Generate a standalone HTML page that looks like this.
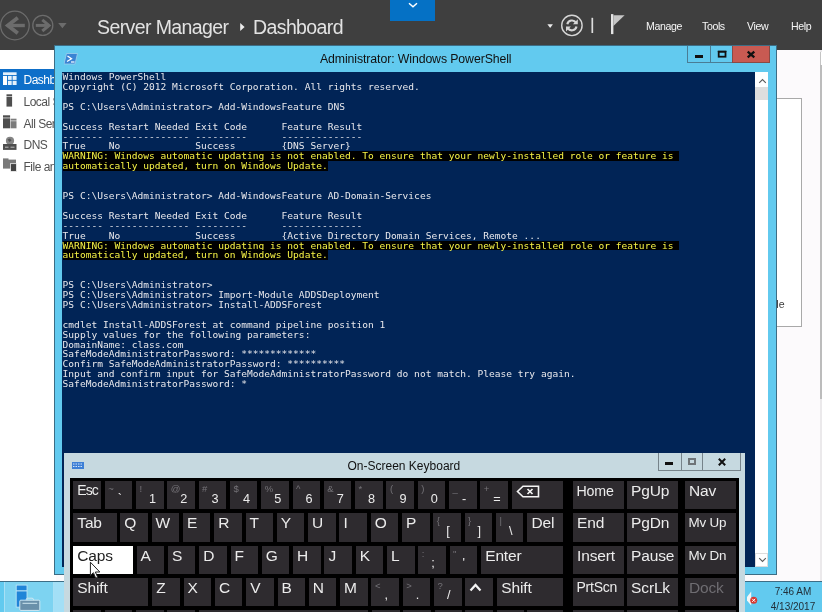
<!DOCTYPE html>
<html><head><meta charset="utf-8"><title>Server Manager</title>
<style>
*{box-sizing:border-box;margin:0;padding:0}
html,body{will-change:transform;width:822px;height:612px;overflow:hidden;background:#fcfafc;font-family:"Liberation Sans",sans-serif}
.abs{position:absolute}
#hdr{left:0;top:0;width:822px;height:50.4px;background:#3f3f3f}
#hdr .t{color:#e2e2e2;font-size:19.5px;top:15.6px;white-space:nowrap;letter-spacing:-0.6px}
#hdr .m{color:#f6f6f6;font-size:10.6px;top:20px;white-space:nowrap;letter-spacing:-0.4px}
#side{left:0;top:50px;width:56px;height:531px;background:#fff;overflow:hidden}
#side .it{left:0;width:56px;height:21px;font-size:12px;letter-spacing:-0.5px;color:#525252;white-space:nowrap;padding-left:23.5px;line-height:22px}
#side .sel{background:#0e6fc9;color:#fff}
/* PowerShell window */
#ps{left:54px;top:45px;width:723px;height:530px;background:#62caef;border:1px solid #3d6d85}
#pscon{left:7px;top:26px;width:693px;height:495px;background:#012456;overflow:hidden}
#pscon pre{position:absolute;left:0.6px;top:0.1px;font-family:"DejaVu Sans Mono","Liberation Mono",monospace;font-size:9.55px;line-height:9.9px;color:#e8e8ec;white-space:pre;letter-spacing:0.015px}
#pscon .w{background:#000;color:#f8f446;display:inline-block;height:9.9px;line-height:9.9px;vertical-align:top}
#pssb{left:700px;top:26px;width:13px;height:495px;background:#fff}
.cap{font-size:12px;color:#111;white-space:nowrap}
/* OSK */
#osk{left:63.5px;top:452.5px;width:681.7px;height:160px;background:#c6d9e0}
#kb{left:6.5px;top:25.5px;width:669.3px;height:134px;background:#000}
.k{position:absolute;background:#2e2b2f;color:#ececec;font-size:15.5px;letter-spacing:-0.15px;line-height:17px;height:28.2px;padding:1px 0 0 4px;white-space:nowrap;overflow:hidden}
.k.esc{font-size:14px;letter-spacing:-0.9px;padding-top:1.3px}
.k.hm{font-size:14.2px;padding:1.5px 0 0 3.5px}
.k.c{padding-left:0;text-align:center;width:27.7px;padding-top:4px}
.k.s{width:27.7px;padding:0}
.k.s i{position:absolute;font-style:normal;left:3.5px;top:2px;font-size:9.5px;line-height:11px;color:#757378}
.k.s b{position:absolute;font-weight:normal;left:13px;top:10.5px;font-size:12.7px;line-height:15px;color:#ececec}
.k.caps{background:#fff;color:#222}
.k.sm{font-size:13.4px;padding:1px 0 0 3.5px}
.k.dim{color:#6f6d72}
.k.ps{font-size:14px;letter-spacing:-0.25px;padding:1.5px 0 0 3.5px}
#tb{left:0;top:580.6px;width:822px;height:32px;background:#62caef;border-top:1px solid #3d6d85}
</style></head><body>
<div id="hdr" class="abs">
  <svg class="abs" style="left:0;top:0" width="80" height="50" viewBox="0 0 80 50">
    <circle cx="14.900" cy="25.500" r="14.300" fill="none" stroke="#6c6c6c" stroke-width="1.300"/>
    <path d="M24.800 25.500H8" fill="none" stroke="#6c6c6c" stroke-width="3.400"/>
    <path d="M17.800 17.800L7.800 25.500L17.800 33.200" fill="none" stroke="#6c6c6c" stroke-width="3.800"/>
    <circle cx="42.800" cy="25.400" r="10" fill="none" stroke="#6c6c6c" stroke-width="1.300"/>
    <path d="M35.800 25.400H47.500" fill="none" stroke="#6c6c6c" stroke-width="3"/>
    <path d="M42.300 19.800L49 25.400L42.300 31" fill="none" stroke="#6c6c6c" stroke-width="3"/>
    <path d="M58.200 23H66.600L62.400 28.200Z" fill="#6c6c6c"/>
  </svg>
  <div class="abs t" style="left:97px">Server Manager</div>
  <svg class="abs" style="left:238.5px;top:21.500px" width="8" height="10"><path d="M1.200 1L5.600 5L1.200 9Z" fill="#ececec"/></svg>
  <div class="abs t" style="left:253px">Dashboard</div>
  <div class="abs" style="left:390px;top:0;width:45px;height:20.5px;background:#0571c5"></div>
  <svg class="abs" style="left:407.500px;top:1.500px" width="10" height="7"><path d="M1 1.300L5 4.800L9 1.300" fill="none" stroke="#fff" stroke-width="1.500"/></svg>
  <svg class="abs" style="left:540px;top:8px" width="100" height="36" viewBox="0 0 100 36">
    <path d="M7.400 16.200H12.900L10.150 19.900Z" fill="#ececec"/>
    <circle cx="31.900" cy="17.400" r="10.200" fill="none" stroke="#d6d6d6" stroke-width="1.400"/>
    <path d="M27.300 16.300A4.800 4.800 0 0 1 36 14.600M36.500 18.500A4.800 4.800 0 0 1 27.800 20.200" fill="none" stroke="#d6d6d6" stroke-width="2.100"/>
    <path d="M37.800 11.300V16.200H32.900Z M26 23.500V18.600H30.900Z" fill="#d6d6d6"/>
    <path d="M52.300 9.800V25" stroke="#dcdcdc" stroke-width="1.700"/>
    <rect x="71" y="6.100" width="2.400" height="20" fill="#e4e4e4"/>
    <path d="M73.400 7.300H84.600L73.400 17.900Z" fill="#c6c6c6"/>
  </svg>
  <div class="abs m" style="left:646px">Manage</div>
  <div class="abs m" style="left:702px">Tools</div>
  <div class="abs m" style="left:747px">View</div>
  <div class="abs m" style="left:791px">Help</div>
</div>

<div id="side" class="abs">
  <div class="abs it sel" style="top:19.2px;height:20.6px">Dashboard</div>
  <div class="abs it" style="top:41.1px">Local Server</div>
  <div class="abs it" style="top:62.5px">All Servers</div>
  <div class="abs it" style="top:84.1px">DNS</div>
  <div class="abs it" style="top:105.700px">File and Storage</div>
  <svg class="abs" style="left:0;top:19px" width="22" height="110" viewBox="0 0 22 110">
    <g fill="#e4f1fb"><rect x="3" y="3.300" width="13.600" height="2.700"/><rect x="3" y="6.900" width="4" height="9.100" fill="#fff"/><rect x="7.900" y="6.900" width="3.800" height="4"/><rect x="12.600" y="6.900" width="4" height="4"/><rect x="7.900" y="11.800" width="3.800" height="4.200"/><rect x="12.600" y="11.800" width="4" height="4.200"/></g>
    <g fill="#4e4e4e"><rect x="6.500" y="25.300" width="5.600" height="1.700"/><rect x="6.500" y="27.600" width="5.600" height="10"/>
    <rect x="3" y="46.300" width="7.100" height="2.300"/><rect x="3" y="49.300" width="7.100" height="10"/></g>
    <g fill="#7c7c7c"><rect x="10.600" y="49.700" width="5.900" height="1.900"/><rect x="10.600" y="52.200" width="5.900" height="7.100"/></g>
    <circle cx="10" cy="71.800" r="4.100" fill="#858585"/><path d="M7.500 70.500L10 69.500L11.500 71.500L9.500 73Z" fill="#555"/>
    <rect x="3" y="75" width="13.500" height="5.900" fill="#4e4e4e"/><path d="M5 78.200H8.500M10.500 78.200H14.500" stroke="#bdbdbd" stroke-width="1"/>
    <rect x="3" y="89.400" width="5.500" height="2" fill="#7a7a7a"/><rect x="3" y="90.600" width="13" height="9" fill="#7a7a7a"/>
    <rect x="10.600" y="94.700" width="5.900" height="7.800" fill="#444" stroke="#fff" stroke-width="0.700"/>
  </svg>
</div>

<!-- right background panel of Server Manager -->
<div class="abs" style="left:770px;top:98px;width:32px;height:228.8px;border:1px solid #a9a9a9;background:#fff"></div>
<div class="abs" style="left:772.8px;top:297.6px;font-size:10.6px;color:#3c3c3c">de</div>
<div class="abs" style="left:820.2px;top:50px;width:2px;height:531px;background:#ebe9eb"></div>
<div class="abs" style="left:820.2px;top:65px;width:2px;height:334px;background:#bcbcbc"></div>
<div class="abs" style="left:820.2px;top:52px;width:2px;height:13px;background:#fff;border-left:1px solid #c4c4c4"></div>

<!-- PowerShell window -->
<div id="ps" class="abs">
  <svg class="abs" style="left:9px;top:7px" width="14" height="12" viewBox="0 0 14 12"><path d="M2.500 0.500H13.500L11 11H0Z" fill="#3a84d4" stroke="#9fd0ee" stroke-width="0.8"/><path d="M3.500 3L7.500 5.800L3 8.500" fill="none" stroke="#fff" stroke-width="1.3"/><path d="M7 9H10.500" stroke="#fff" stroke-width="1.2"/></svg>
  <div class="abs cap" style="left:265px;top:6px;font-size:12.3px;letter-spacing:-0.1px">Administrator: Windows PowerShell</div>
  <div class="abs" style="left:632px;top:0;width:24px;height:17px;border:1px solid #4a7d95;border-top:0"></div>
  <div class="abs" style="left:655px;top:0;width:23px;height:17px;border:1px solid #4a7d95;border-top:0"></div>
  <div class="abs" style="left:677px;top:0;width:38px;height:17px;border:1px solid #8a4a45;border-top:0;background:#c85a52"></div>
  <div class="abs" style="left:640px;top:9px;width:8px;height:3px;background:#111"></div>
  <svg class="abs" style="left:662px;top:4px" width="11" height="9" viewBox="0 0 11 9"><rect x="1.700" y="1.800" width="6.800" height="4.900" fill="none" stroke="#111" stroke-width="1.800"/><rect x="0.800" y="0.700" width="8.600" height="1.400" fill="#111"/></svg>
  <svg class="abs" style="left:691.300px;top:3px" width="10" height="10"><path d="M1.700 2.600L8.300 8.400M8.300 2.600L1.700 8.400" stroke="#111" stroke-width="2.300"/></svg>
  <div id="pscon" class="abs"><pre>Windows PowerShell
Copyright (C) 2012 Microsoft Corporation. All rights reserved.

PS C:\Users\Administrator&gt; Add-WindowsFeature DNS

Success Restart Needed Exit Code      Feature Result
------- -------------- ---------      --------------
True    No             Success        {DNS Server}
<span class="w">WARNING: Windows automatic updating is not enabled. To ensure that your newly-installed role or feature is </span>
<span class="w">automatically updated, turn on Windows Update.</span>


PS C:\Users\Administrator&gt; Add-WindowsFeature AD-Domain-Services

Success Restart Needed Exit Code      Feature Result
------- -------------- ---------      --------------
True    No             Success        {Active Directory Domain Services, Remote ...
<span class="w">WARNING: Windows automatic updating is not enabled. To ensure that your newly-installed role or feature is </span>
<span class="w">automatically updated, turn on Windows Update.</span>


PS C:\Users\Administrator&gt;
PS C:\Users\Administrator&gt; Import-Module ADDSDeployment
PS C:\Users\Administrator&gt; Install-ADDSForest

cmdlet Install-ADDSForest at command pipeline position 1
Supply values for the following parameters:
DomainName: class.com
SafeModeAdministratorPassword: *************
Confirm SafeModeAdministratorPassword: **********
Input and confirm input for SafeModeAdministratorPassword do not match. Please try again.
SafeModeAdministratorPassword: *</pre></div>
  <div id="pssb" class="abs">
    <div class="abs" style="left:0;top:15px;width:13px;height:13px;background:#dedede"></div>
    <svg class="abs" style="left:2.5px;top:5.5px" width="9" height="6"><path d="M1.200 4.800L4.500 1.500L7.800 4.800" fill="none" stroke="#5a5a5a" stroke-width="1.100"/></svg>
    <div class="abs" style="left:0;top:481px;width:13px;height:14px;border:1px solid #dcdcdc"></div><svg class="abs" style="left:2.5px;top:485px" width="9" height="6"><path d="M1.200 1.200L4.500 4.500L7.800 1.200" fill="none" stroke="#5a5a5a" stroke-width="1.100"/></svg>
  </div>
</div>

<!-- Taskbar -->
<div id="tb" class="abs">
  <div class="abs" style="left:3.5px;top:0;width:50px;height:31px;background:#7dd3f1;border-left:1px solid #a8e0f5;border-right:1px solid #a8e0f5"></div>
  <div class="abs" style="left:54px;top:0;width:10px;height:31px;background:#a3dff6"></div>
  <svg class="abs" style="left:14px;top:2px" width="28" height="29" viewBox="0 0 28 29">
    <rect x="2.200" y="1.100" width="10.800" height="22" fill="#1f84d8" stroke="#c4e8f8" stroke-width="0.800"/>
    <rect x="2.200" y="6.300" width="10.800" height="1.100" fill="#c4e8f8"/>
    <rect x="12.200" y="14.200" width="7.300" height="4" rx="1.500" fill="none" stroke="#cfe8f2" stroke-width="1"/>
    <rect x="5.800" y="16.200" width="20" height="10.200" rx="1" fill="#6a90aa" stroke="#d8eef7" stroke-width="0.900"/>
    <path d="M8.500 19.300H23.200" stroke="#d8eef7" stroke-width="0.900"/>
  </svg>
  <svg class="abs" style="left:744.5px;top:5px" width="18" height="22" viewBox="0 0 18 22"><path d="M2 10L6.200 4.500V18.500L2 13.500Z" fill="#f6f6f6"/><circle cx="8.700" cy="13.300" r="3.500" fill="#d63a32"/><path d="M7.200 11.800L10.200 14.800M10.200 11.800L7.200 14.800" stroke="#fff" stroke-width="1"/></svg>
  <div class="abs" style="left:765px;top:2.1px;width:56px;text-align:center;font-size:10px;color:#22303a;line-height:15px">7:46 AM<br>4/13/2017</div>
</div>

<!-- On-Screen Keyboard -->
<div id="osk" class="abs">
  <svg class="abs" style="left:8px;top:9px" width="12" height="7" viewBox="0 0 12 7"><rect x="0" y="0" width="12" height="7" fill="#3d7fd6"/><path d="M1 2H11M1 4.500H11" stroke="#cfe3f7" stroke-width="1" stroke-dasharray="1.500 1"/></svg>
  <div class="abs cap" style="left:284px;top:6px;font-size:12px">On-Screen Keyboard</div>
  <div class="abs" style="left:594px;top:0;width:24px;height:18px;border:1px solid #76838a;border-top:0"></div>
  <div class="abs" style="left:617px;top:0;width:22px;height:18px;border:1px solid #76838a;border-top:0"></div>
  <div class="abs" style="left:638px;top:0;width:39px;height:18px;border:1px solid #76838a;border-top:0"></div>
  <div class="abs" style="left:601.5px;top:9.3px;width:8.3px;height:3.2px;background:#111"></div>
  <div class="abs" style="left:624.5px;top:5.5px;width:8px;height:7px;border:2px solid #6e7478"></div>
  <svg class="abs" style="left:653px;top:5px" width="10" height="8"><path d="M1.800 0.800L8.200 7.200M8.200 0.800L1.800 7.200" stroke="#111" stroke-width="2"/></svg>
  <div id="kb" class="abs"><!--K0-->
<div class="k esc" style="left:3.3px;top:3.2px;width:27.8px;">Esc</div>
<div class="k s" style="left:34.7px;top:3.2px;width:27.5px;"><i>~</i><b>`</b></div>
<div class="k s" style="left:66.0px;top:3.2px;width:27.5px;"><i>!</i><b>1</b></div>
<div class="k s" style="left:97.3px;top:3.2px;width:27.5px;"><i>@</i><b>2</b></div>
<div class="k s" style="left:128.6px;top:3.2px;width:27.5px;"><i>#</i><b>3</b></div>
<div class="k s" style="left:159.9px;top:3.2px;width:27.5px;"><i>$</i><b>4</b></div>
<div class="k s" style="left:191.2px;top:3.2px;width:27.5px;"><i>%</i><b>5</b></div>
<div class="k s" style="left:222.5px;top:3.2px;width:27.5px;"><i>^</i><b>6</b></div>
<div class="k s" style="left:253.8px;top:3.2px;width:27.5px;"><i>&amp;</i><b>7</b></div>
<div class="k s" style="left:285.1px;top:3.2px;width:27.5px;"><i>*</i><b>8</b></div>
<div class="k s" style="left:316.4px;top:3.2px;width:27.5px;"><i>(</i><b>9</b></div>
<div class="k s" style="left:347.7px;top:3.2px;width:27.5px;"><i>)</i><b>0</b></div>
<div class="k s" style="left:379.0px;top:3.2px;width:27.5px;"><i>_</i><b>-</b></div>
<div class="k s" style="left:410.3px;top:3.2px;width:27.5px;"><i>+</i><b>=</b></div>
<div class="k " style="left:441.7px;top:3.2px;width:51.6px;"><svg style="position:absolute;left:4px;top:3.5px" width="24" height="13" viewBox="0 0 24 13"><path d="M7 1.200H22.500V11.800H7L1.500 6.500Z" fill="none" stroke="#f4f4f4" stroke-width="1.600"/><path d="M11.500 4L16.500 9M16.500 4L11.500 9" stroke="#f4f4f4" stroke-width="1.700"/></svg></div>
<div class="k " style="left:3.3px;top:35.4px;width:43.6px;">Tab</div>
<div class="k " style="left:50.3px;top:35.4px;width:27.5px;">Q</div>
<div class="k " style="left:81.6px;top:35.4px;width:27.5px;">W</div>
<div class="k " style="left:112.9px;top:35.4px;width:27.5px;">E</div>
<div class="k " style="left:144.2px;top:35.4px;width:27.5px;">R</div>
<div class="k " style="left:175.5px;top:35.4px;width:27.5px;">T</div>
<div class="k " style="left:206.8px;top:35.4px;width:27.5px;">Y</div>
<div class="k " style="left:238.1px;top:35.4px;width:27.5px;">U</div>
<div class="k " style="left:269.4px;top:35.4px;width:27.5px;">I</div>
<div class="k " style="left:300.7px;top:35.4px;width:27.5px;">O</div>
<div class="k " style="left:332.0px;top:35.4px;width:27.5px;">P</div>
<div class="k s" style="left:363.3px;top:35.4px;width:27.5px;"><i>{</i><b>[</b></div>
<div class="k s" style="left:394.6px;top:35.4px;width:27.5px;"><i>}</i><b>]</b></div>
<div class="k s" style="left:425.9px;top:35.4px;width:27.5px;"><i>|</i><b>\</b></div>
<div class="k " style="left:457.4px;top:35.4px;width:35.9px;">Del</div>
<div class="k caps" style="left:3.3px;top:67.5px;width:60.0px;">Caps</div>
<div class="k " style="left:66.6px;top:67.5px;width:27.5px;">A</div>
<div class="k " style="left:97.9px;top:67.5px;width:27.5px;">S</div>
<div class="k " style="left:129.2px;top:67.5px;width:27.5px;">D</div>
<div class="k " style="left:160.5px;top:67.5px;width:27.5px;">F</div>
<div class="k " style="left:191.8px;top:67.5px;width:27.5px;">G</div>
<div class="k " style="left:223.1px;top:67.5px;width:27.5px;">H</div>
<div class="k " style="left:254.4px;top:67.5px;width:27.5px;">J</div>
<div class="k " style="left:285.7px;top:67.5px;width:27.5px;">K</div>
<div class="k " style="left:317.0px;top:67.5px;width:27.5px;">L</div>
<div class="k s" style="left:348.3px;top:67.5px;width:27.5px;"><i>:</i><b>;</b></div>
<div class="k s" style="left:379.6px;top:67.5px;width:27.5px;"><i>"</i><b>'</b></div>
<div class="k " style="left:411.2px;top:67.5px;width:82.1px;">Enter</div>
<div class="k " style="left:3.3px;top:99.6px;width:75.2px;">Shift</div>
<div class="k " style="left:82.3px;top:99.6px;width:27.5px;">Z</div>
<div class="k " style="left:113.6px;top:99.6px;width:27.5px;">X</div>
<div class="k " style="left:144.9px;top:99.6px;width:27.5px;">C</div>
<div class="k " style="left:176.2px;top:99.6px;width:27.5px;">V</div>
<div class="k " style="left:207.5px;top:99.6px;width:27.5px;">B</div>
<div class="k " style="left:238.8px;top:99.6px;width:27.5px;">N</div>
<div class="k " style="left:270.1px;top:99.6px;width:27.5px;">M</div>
<div class="k s" style="left:301.4px;top:99.6px;width:27.5px;"><i>&lt;</i><b>,</b></div>
<div class="k s" style="left:332.7px;top:99.6px;width:27.5px;"><i>&gt;</i><b>.</b></div>
<div class="k s" style="left:364.0px;top:99.6px;width:27.5px;"><i>?</i><b>/</b></div>
<div class="k " style="left:395.3px;top:99.6px;width:27.5px;"><svg style="position:absolute;left:3.5px;top:5px" width="13" height="9" viewBox="0 0 13 9"><path d="M1.500 7.500L6.500 2L11.500 7.500" fill="none" stroke="#f4f4f4" stroke-width="2.200"/></svg></div>
<div class="k " style="left:427.3px;top:99.6px;width:66.0px;">Shift</div>
<div class="k " style="left:3.3px;top:131.8px;width:27.8px;">Fn</div>
<div class="k " style="left:34.7px;top:131.8px;width:27.5px;">Ctrl</div>
<div class="k " style="left:66.0px;top:131.8px;width:27.5px;"></div>
<div class="k " style="left:97.3px;top:131.8px;width:27.5px;">Alt</div>
<div class="k " style="left:128.6px;top:131.8px;width:169.9px;"></div>
<div class="k " style="left:302.0px;top:131.8px;width:27.7px;">Alt</div>
<div class="k " style="left:333.3px;top:131.8px;width:27.7px;">Ctrl</div>
<div class="k " style="left:364.5px;top:131.8px;width:27.7px;"></div>
<div class="k " style="left:395.3px;top:131.8px;width:27.5px;"></div>
<div class="k " style="left:427.3px;top:131.8px;width:27.2px;"></div>
<div class="k " style="left:457.4px;top:131.8px;width:35.9px;"></div>
<div class="k hm" style="left:503.0px;top:3.2px;width:50.8px;">Home</div>
<div class="k " style="left:557.1px;top:3.2px;width:50.8px;">PgUp</div>
<div class="k " style="left:614.9px;top:3.2px;width:50.8px;">Nav</div>
<div class="k " style="left:503.0px;top:35.4px;width:50.8px;">End</div>
<div class="k " style="left:557.1px;top:35.4px;width:50.8px;">PgDn</div>
<div class="k sm" style="left:614.9px;top:35.4px;width:50.8px;">Mv Up</div>
<div class="k " style="left:503.0px;top:67.5px;width:50.8px;">Insert</div>
<div class="k " style="left:557.1px;top:67.5px;width:50.8px;">Pause</div>
<div class="k sm" style="left:614.9px;top:67.5px;width:50.8px;">Mv Dn</div>
<div class="k ps" style="left:503.0px;top:99.6px;width:50.8px;">PrtScn</div>
<div class="k " style="left:557.1px;top:99.6px;width:50.8px;">ScrLk</div>
<div class="k dim" style="left:614.9px;top:99.6px;width:50.8px;">Dock</div>
<div class="k " style="left:503.0px;top:131.8px;width:50.8px;">Options</div>
<div class="k " style="left:557.1px;top:131.8px;width:50.8px;">Help</div>
<div class="k " style="left:614.9px;top:131.8px;width:50.8px;">Fade</div>
<!--K1--></div>
</div>
<svg class="abs" style="left:89px;top:561px" width="13" height="19" viewBox="0 0 13 19"><path d="M1.400 1.200V14.500L4.400 11.700L6.700 17.200L8.700 16.300L6.400 11H10.800Z" fill="#fff" stroke="#222" stroke-width="1"/></svg>
</body></html>
